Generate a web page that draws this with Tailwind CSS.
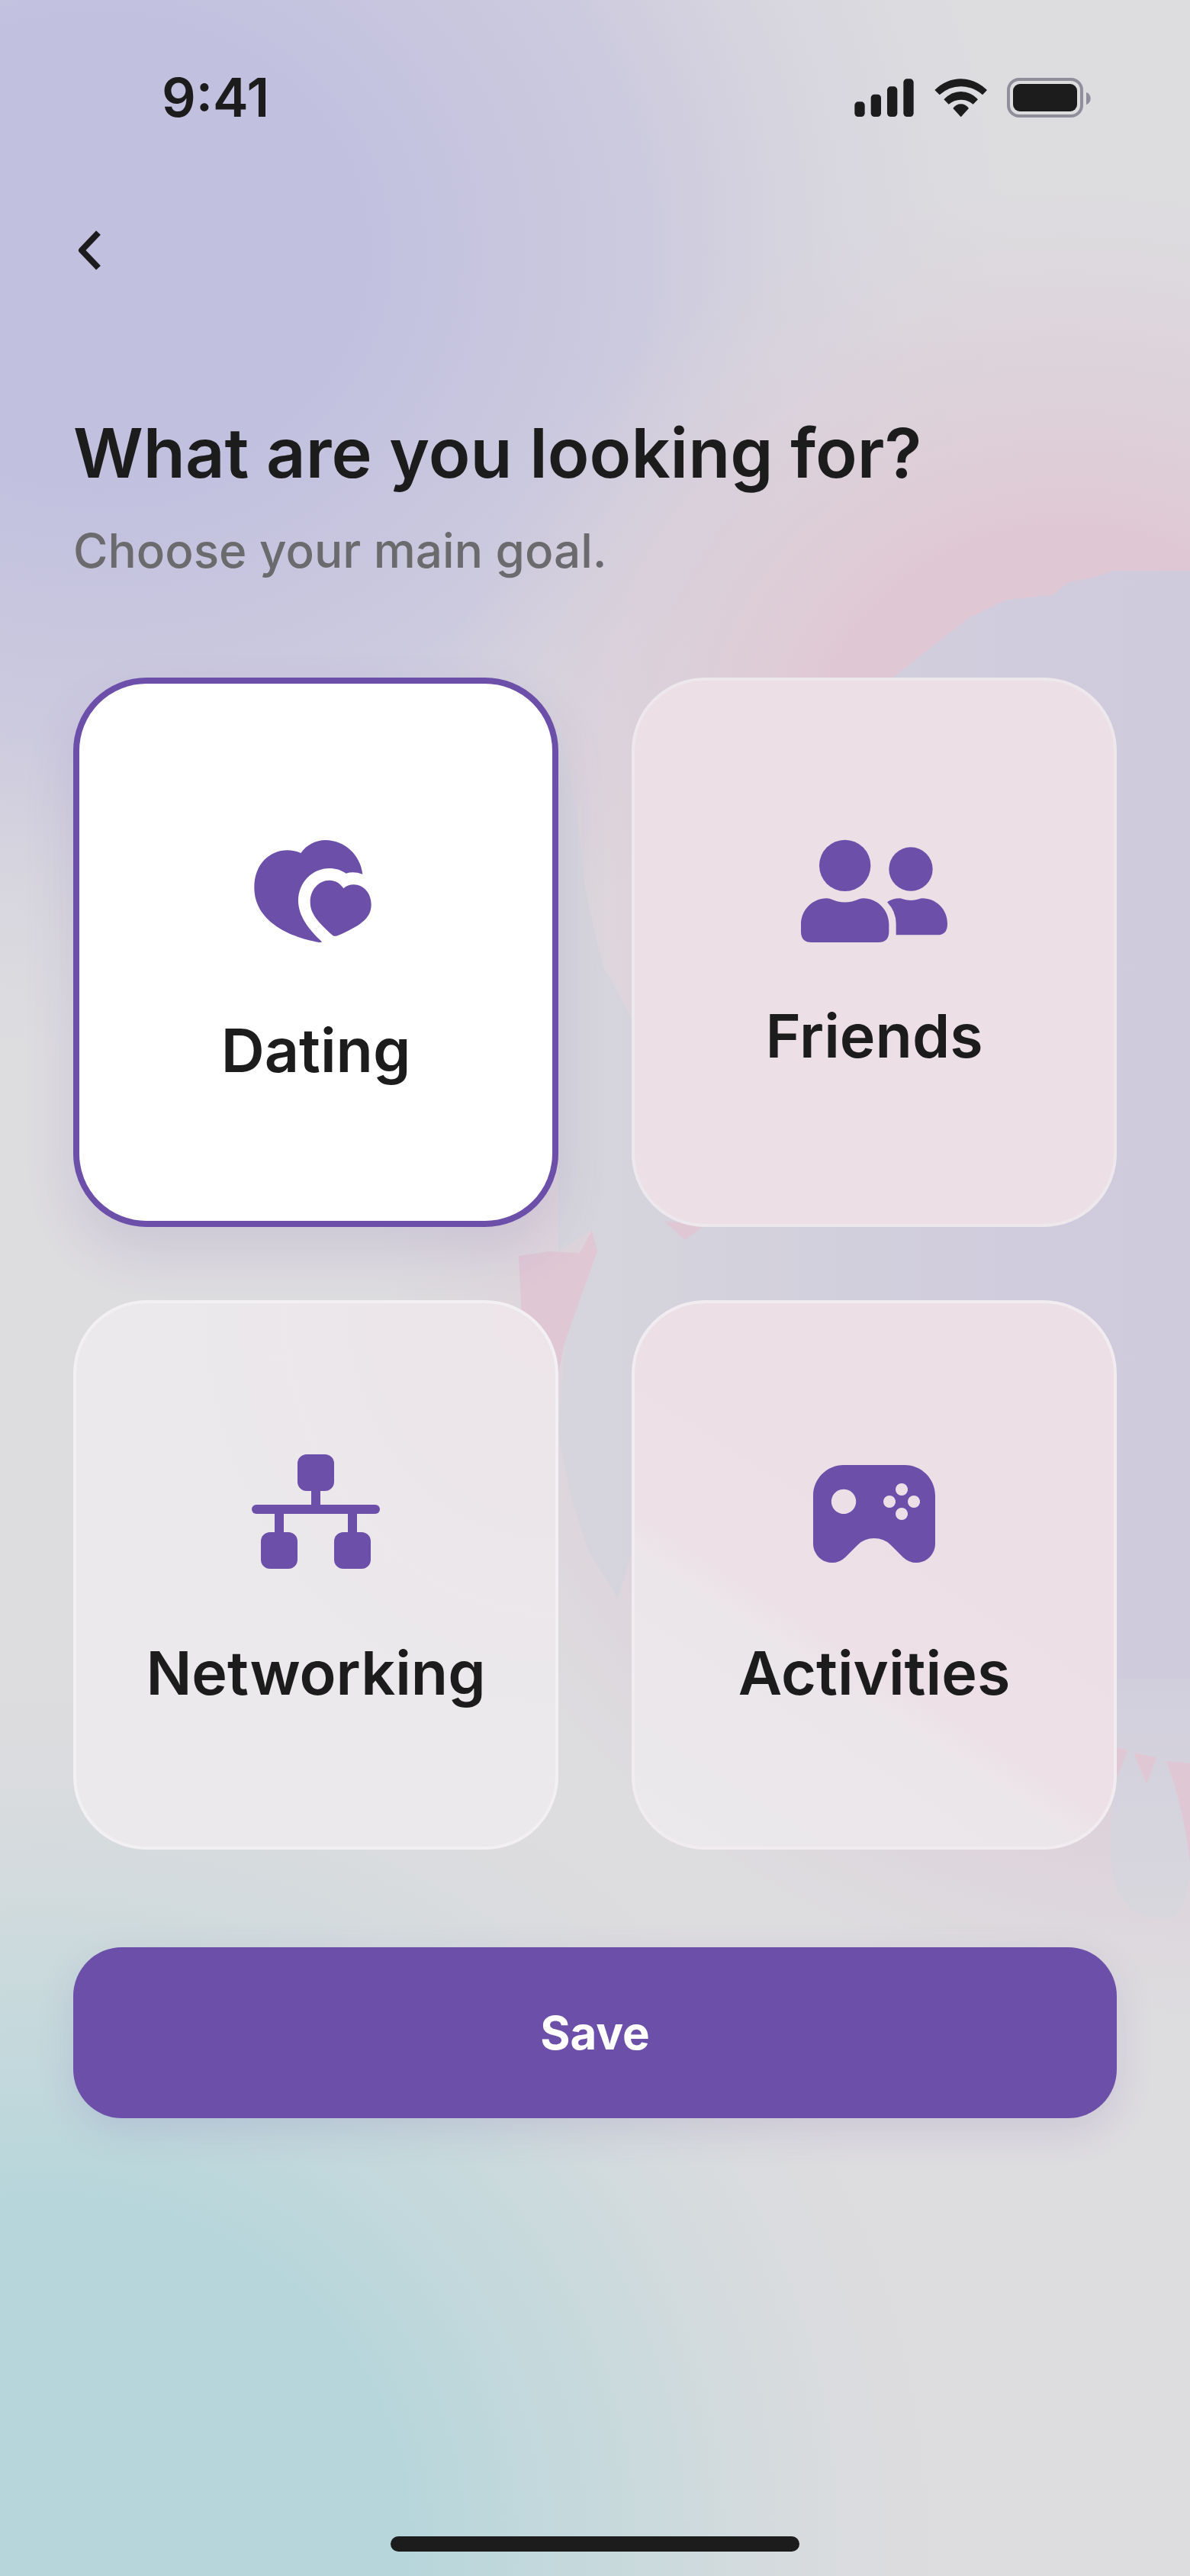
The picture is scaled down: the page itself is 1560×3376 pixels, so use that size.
<!DOCTYPE html>
<html lang="en">
<head>
<meta charset="utf-8">
<meta name="viewport" content="width=device-width, initial-scale=1">
<title>What are you looking for?</title>
<script src="https://cdn.jsdelivr.net/npm/@tailwindcss/browser@4"></script>
</head>
<body class="bg-[#dddcdf] font-['Inter',sans-serif] text-[#1c1c1c]">
<div class="relative isolate flex min-h-screen flex-col overflow-hidden">

  <!-- Soft colour backdrop -->
  <svg class="absolute inset-0 -z-10 h-full w-full" viewBox="0 0 1560 3376" preserveAspectRatio="none" aria-hidden="true">
    <defs>
      <radialGradient id="lilac" gradientUnits="userSpaceOnUse" cx="0" cy="0" r="1" gradientTransform="translate(130 330) scale(1200 1060)">
        <stop offset="0.28" stop-color="#c1c0df"/><stop offset="0.6" stop-color="#c8c5de" stop-opacity="0.78"/><stop offset="1" stop-color="#d6d4de" stop-opacity="0"/>
      </radialGradient>
      <radialGradient id="rose" gradientUnits="userSpaceOnUse" cx="0" cy="0" r="1" gradientTransform="translate(1400 1000) scale(820 760)">
        <stop offset="0.4" stop-color="#dfc8d4"/><stop offset="0.7" stop-color="#ddcdd7" stop-opacity="0.6"/><stop offset="1" stop-color="#dbd3db" stop-opacity="0"/>
      </radialGradient>
      <radialGradient id="roseLow" gradientUnits="userSpaceOnUse" cx="0" cy="0" r="1" gradientTransform="translate(1440 1850) rotate(25) scale(980 760)">
        <stop offset="0.45" stop-color="#dfc8d4"/><stop offset="1" stop-color="#dccfd8" stop-opacity="0"/>
      </radialGradient>
      <radialGradient id="aqua" gradientUnits="userSpaceOnUse" cx="0" cy="0" r="1" gradientTransform="translate(60 3330) scale(1180 1120)">
        <stop offset="0.4" stop-color="#b7d6db"/><stop offset="0.68" stop-color="#c6d9dc" stop-opacity="0.8"/><stop offset="1" stop-color="#d6dbdc" stop-opacity="0"/>
      </radialGradient>
      <linearGradient id="mist" x1="0" y1="0" x2="1" y2="0">
        <stop offset="0" stop-color="#d6d5dc"/><stop offset="0.7" stop-color="#d0ccdd"/><stop offset="1" stop-color="#cfcbdd"/>
      </linearGradient>
      <linearGradient id="drop" x1="0" y1="0" x2="0" y2="1">
        <stop offset="0" stop-color="#d2cfdd"/><stop offset="1" stop-color="#d8d7dd"/>
      </linearGradient>
    </defs>
    <rect width="1560" height="3376" fill="#dddcdf"/>
    <rect width="1560" height="3376" fill="url(#lilac)"/>
    <rect width="1560" height="3376" fill="url(#rose)"/>
    <rect width="1560" height="3376" fill="url(#roseLow)"/>
    <path fill="url(#mist)" d="M1560 748H1460L1430 758L1400 763L1380 780L1320 786L1270 810L1170 888L1100 1340L828 1334L790 1265L768 1170L758 1080L745 1000L732 940V1640L775 1612L783 1640L765 1690L740 1760L732 1880L748 1960L770 2030L810 2095L826 2040L1400 2000L1464 2290H1560Z"/>
    <path fill="url(#drop)" d="M1464 2200H1560V2460Q1552 2513 1530 2515Q1500 2515 1480 2500Q1458 2480 1456 2430Q1456 2340 1464 2290Z"/>
    <path fill="#dfc8d4" d="M870 1600L898 1625L925 1605ZM680 1646L720 1640L760 1642L776 1612L783 1640L765 1690L740 1760L732 1800L684 1730ZM1460 2289L1478 2294L1464 2330ZM1486 2297L1516 2303L1503 2338ZM1529 2308L1560 2311V2440Q1552 2370 1529 2308Z"/>
    <rect width="1560" height="3376" fill="url(#aqua)"/>
  </svg>

  <!-- Status bar -->
  <header class="flex h-64 items-center justify-between pr-32 pl-[212px]">
    <time class="text-[70px] leading-20 font-semibold">9:41</time>
    <div class="flex items-center gap-6">
      <svg class="h-[50px] w-20" viewBox="114 98 240 150" fill="#1c1c1c" role="img" aria-label="Signal"><rect x="115" y="189" width="40" height="59" rx="14"/><rect x="179" y="160" width="40" height="88" rx="14"/><rect x="243" y="129" width="40" height="119" rx="14"/><rect x="307" y="99" width="40" height="149" rx="14"/></svg>
      <svg class="h-[50px] w-[72px]" viewBox="426 98 216 150" fill="#1c1c1c" role="img" aria-label="Wi-Fi"><path d="M430 143Q476 99 533 99T636 143L618 162Q580 129 533 129T449 162Z"/><path d="M466 180Q495 149 533 149T600 180L581 199Q560 181 533 181T485 199Z"/><path d="M502 215Q514 198 533 198T564 215L533 249Z"/></svg>
      <svg class="h-[52px] w-[112px]" viewBox="720 96 336 156" role="img" aria-label="Battery"><rect x="726" y="102" width="288" height="144" rx="42" fill="none" stroke="#918e9b" stroke-width="12"/><rect x="744" y="120" width="252" height="108" rx="27" fill="#1c1c1c"/><path d="M1032 153Q1049 160 1049 177T1032 202Z" fill="#918e9b"/></svg>
    </div>
  </header>

  <main class="flex flex-col px-24">
    <nav class="flex h-36 items-center">
      <button type="button" aria-label="Back" class="flex size-12 items-center justify-start">
        <svg class="h-14 w-10" viewBox="0 0 40 56" fill="none" stroke="#1c1c1c" stroke-width="8" stroke-linejoin="round"><path d="M33 5L11 28L33 51"/></svg>
      </button>
    </nav>

    <h1 id="question" class="mt-32 text-[90px] leading-[132px] font-semibold">What are you looking for?</h1>
    <p class="text-[62px] leading-[124px] font-medium text-[#6b6b6d]">Choose your main goal.</p>

    <form class="mt-26 flex flex-col">
      <div role="radiogroup" aria-labelledby="question" class="grid grid-cols-2 gap-24">
        <label class="flex h-[720px] flex-col items-center justify-center gap-16 rounded-[96px] border-8 border-[#6c4fa9] bg-white shadow-[0_32px_64px_#6c4fa926]">
          <input type="radio" name="goal" value="dating" checked class="sr-only">
          <svg class="size-48" viewBox="54 6 576 576" fill="#6c4fa9" aria-hidden="true"><path d="M283 144C305 112 342 93 380 93C455 93 518 152 526 227Q490 214 461 224C440 210 420 204 395 204C328 204 273 260 273 331C273 390 312 443 366 493Q364 496 354 495C230 473 100 408 100 280C100 185 163 133 230 133Q258 133 283 144Z"/><path d="M451 283C436 261 418 251 395 251C354 251 320 288 320 335C320 384 352 416 408 467Q415 473 427 469C510 432 560 404 560 347C560 303 531 268 491 268Q467 268 451 283Z"/></svg>
          <span class="text-[79px] leading-24 font-semibold">Dating</span>
        </label>
        <label class="flex h-[720px] flex-col items-center justify-center gap-16 rounded-[96px] border-4 border-[#ece8ec] bg-[#ecdfe5]">
          <input type="radio" name="goal" value="friends" class="sr-only">
          <svg class="h-[154px] w-48" viewBox="90 63 576 462" fill="#6c4fa9" aria-hidden="true"><circle cx="263" cy="193" r="101"/><circle cx="522" cy="207" r="86"/><path d="M90 424C90 368 136 322 190 322Q200 322 207 325Q263 350 319 325Q326 322 336 322C390 322 436 368 436 424V453Q436 495 394 495H132Q90 495 90 453Z"/><path d="M429 337Q451 322 478 322Q485 322 490 325Q522 335 554 325Q559 322 568 322C622 322 666 366 666 422Q666 466 626 466H464V422Q464 374 429 337Z"/></svg>
          <span class="text-[79px] leading-24 font-semibold">Friends</span>
        </label>
        <label class="flex h-[720px] flex-col items-center justify-center gap-16 rounded-[96px] border-4 border-[#f2f0f2] bg-[#ebe9eb] bg-radial-[at_100%_0%] from-[#ece4e9] to-[#ebe9eb] to-60%">
          <input type="radio" name="goal" value="networking" class="sr-only">
          <svg class="size-48" viewBox="24 24 576 576" fill="#6c4fa9" aria-hidden="true"><rect x="240" y="78" width="144" height="144" rx="36"/><rect x="96" y="384" width="144" height="144" rx="36"/><rect x="384" y="384" width="144" height="144" rx="36"/><rect x="60" y="276" width="504" height="36" rx="18"/><path d="M294 200H330V290H294ZM150 300H186V400H150ZM438 300H474V400H438Z"/></svg>
          <span class="text-[79px] leading-24 font-semibold">Networking</span>
        </label>
        <label class="flex h-[720px] flex-col items-center justify-center gap-16 rounded-[96px] border-4 border-[#f0ecef] bg-linear-[213deg,#ecdfe5_45%,#ede1e7_61%,#ebe6ea_66%,#ebe9ec]">
          <input type="radio" name="goal" value="activities" class="sr-only">
          <svg class="size-48" viewBox="30 -6 576 576" fill="#6c4fa9" aria-hidden="true"><path fill-rule="evenodd" d="M198 90H438C504 90 558 144 558 210V399C558 440 525 474 484 474Q454 474 431 452L383 404Q357 378 318 378T253 404L205 452Q182 474 152 474C111 474 78 440 78 399V210C78 144 132 90 198 90ZM198 185a48.500 48.500 0 1 0 .1 0ZM426 162a24 24 0 1 0 .1 0ZM378 210a24 24 0 1 0 .1 0ZM474 210a24 24 0 1 0 .1 0ZM426 258a24 24 0 1 0 .1 0Z"/></svg>
          <span class="text-[79px] leading-24 font-semibold">Activities</span>
        </label>
      </div>
      <button type="submit" class="mt-32 h-56 rounded-[64px] bg-[#6c4fa9] text-[60px] font-bold text-white shadow-[0_16px_48px_#6c4fa926]">Save</button>
    </form>
  </main>

  <div class="mt-auto flex justify-center pb-8"><div class="h-5 w-[536px] rounded-full bg-[#1c1c1c]"></div></div>
</div>
</body>
</html>
